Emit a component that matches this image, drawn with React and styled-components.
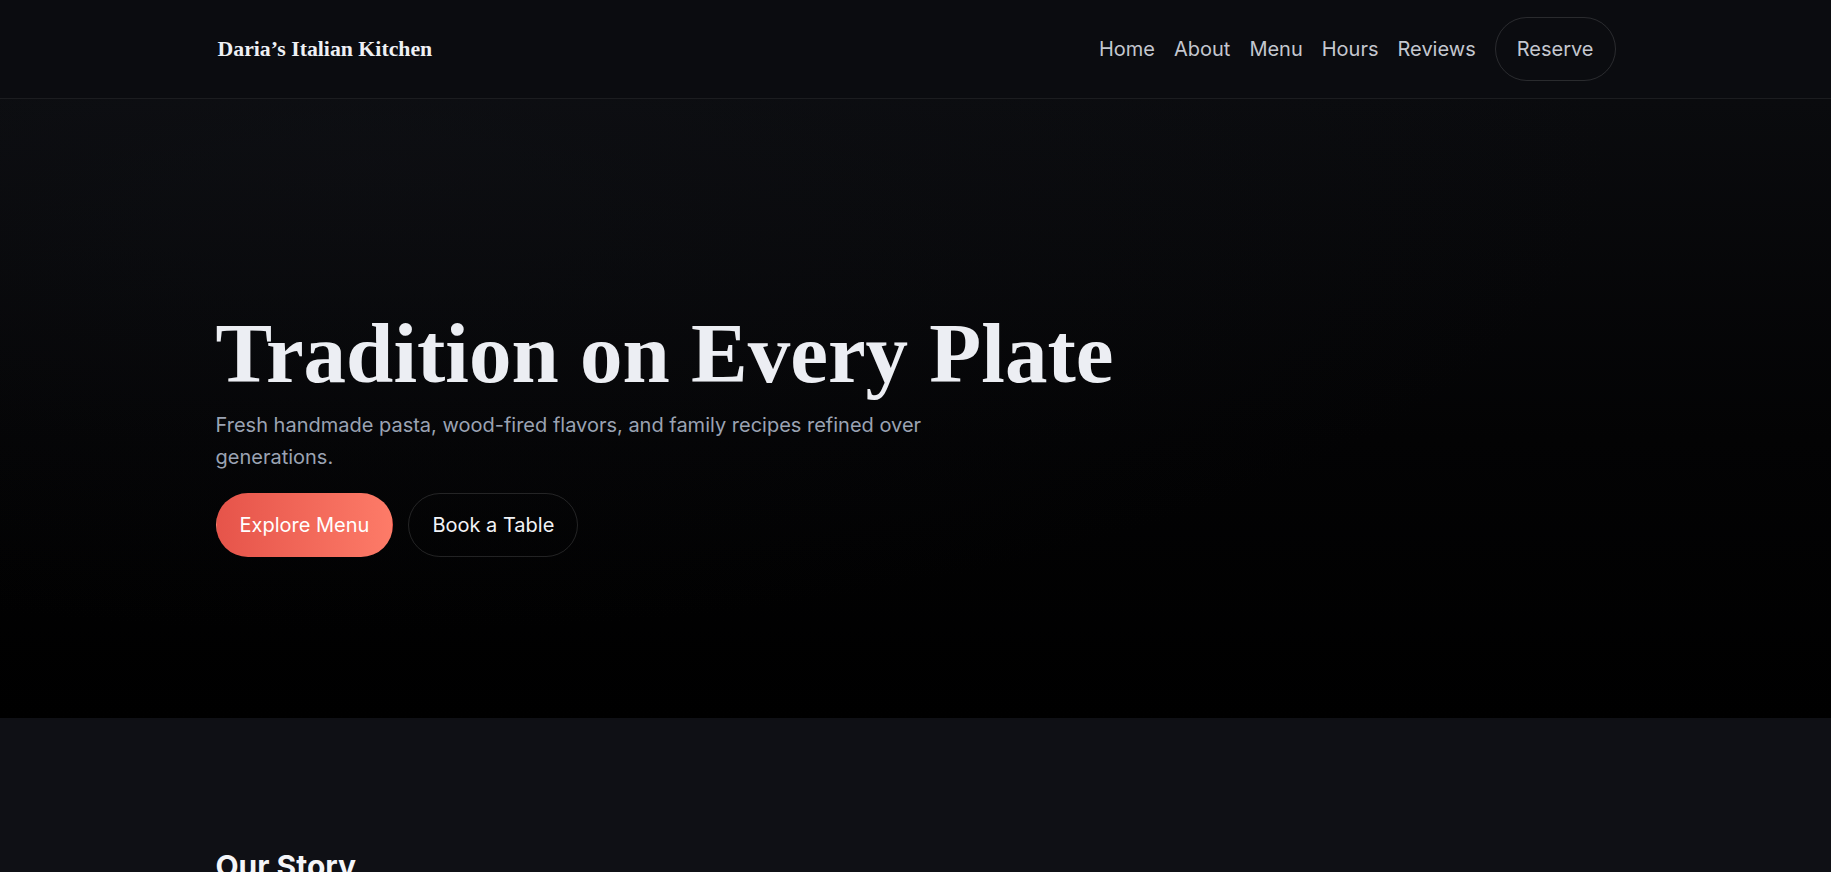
import React from 'react';
import styled, { createGlobalStyle } from 'styled-components';

const GlobalStyle = createGlobalStyle`
  * { box-sizing: border-box; }
  html, body {
    margin: 0;
    padding: 0;
    background: #0f1015;
    color: #eceef3;
    font-family: Inter, "Noto Sans", sans-serif;
  }
`;

const Container = styled.div`
  width: 100%;
  max-width: 1400px;
  margin: 0 auto;
`;

const Header = styled.header`
  background: #0b0c10;
  border-bottom: 1px solid rgba(255, 255, 255, 0.07);
`;

const HeaderInner = styled(Container)`
  height: 98px;
  display: flex;
  align-items: center;
  justify-content: space-between;
`;

const Logo = styled.a`
  font-family: "Liberation Serif", "DejaVu Serif", serif;
  font-weight: 700;
  font-size: 21.8px;
  color: #eef0f4;
  text-decoration: none;
  padding-left: 2px;
`;

const Nav = styled.nav`
  display: flex;
  align-items: center;
  gap: 19px;
`;

const NavLink = styled.a`
  font-size: 20px;
  color: #c4c7cf;
  text-decoration: none;
`;

const Pill = styled.a`
  display: inline-flex;
  align-items: center;
  justify-content: center;
  height: 64px;
  padding: 0 ${p => (p.$muted ? '21px' : '23px')};
  border-radius: 999px;
  font-size: 20px;
  text-decoration: none;
  color: ${p => (p.$primary ? '#ffffff' : p.$muted ? '#c4c7cf' : '#f2f3f7')};
  background: ${p => (p.$primary ? 'linear-gradient(90deg, #e6544a 0%, #fd7b68 100%)' : 'transparent')};
  border: 1px solid ${p => (p.$primary ? 'transparent' : 'rgba(255, 255, 255, 0.13)')};
`;

const Hero = styled.section`
  height: 619px;
  background:
    radial-gradient(ellipse at 20% 10%, rgba(20, 22, 28, 0.35) 0%, rgba(0, 0, 0, 0) 60%),
    linear-gradient(180deg, #0a0b0e 0%, #030304 55%, #000000 100%);
`;

const HeroInner = styled(Container)`
  padding-top: 208px;
`;

const Title = styled.h1`
  margin: 0;
  font-family: "Liberation Serif", "DejaVu Serif", serif;
  font-weight: 700;
  font-size: 85px;
  line-height: 1.1;
  color: #eceef3;
`;

const Lead = styled.p`
  margin: 8px 0 0;
  max-width: 740px;
  font-size: 20px;
  line-height: 1.62;
  color: #9ba3b3;
`;

const Actions = styled.div`
  display: flex;
  gap: 15px;
  margin-top: 20px;
`;

const Story = styled.section`
  background: #0f1015;
  padding-top: 130px;
`;

const SectionTitle = styled.h2`
  margin: 0;
  font-size: 30px;
  font-weight: 700;
  color: #f4f5f8;
`;

const links = ['Home', 'About', 'Menu', 'Hours', 'Reviews'];

export default function App() {
  return (
    <>
      <GlobalStyle />
      <Header>
        <HeaderInner>
          <Logo href="#">Daria’s Italian Kitchen</Logo>
          <Nav>
            {links.map(l => (
              <NavLink key={l} href="#">{l}</NavLink>
            ))}
            <Pill href="#" $muted>Reserve</Pill>
          </Nav>
        </HeaderInner>
      </Header>
      <Hero>
        <HeroInner>
          <Title>Tradition on Every Plate</Title>
          <Lead>
            Fresh handmade pasta, wood-fired flavors, and family recipes refined over generations.
          </Lead>
          <Actions>
            <Pill href="#" $primary>Explore Menu</Pill>
            <Pill href="#">Book a Table</Pill>
          </Actions>
        </HeroInner>
      </Hero>
      <Story>
        <Container>
          <SectionTitle>Our Story</SectionTitle>
        </Container>
      </Story>
    </>
  );
}
